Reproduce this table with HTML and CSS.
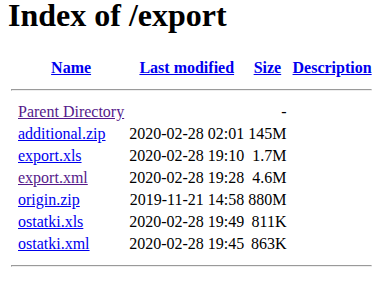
FILE: index.html
```html
<!DOCTYPE html>
<html>
<head>
<meta charset="utf-8">
<title>Index of /export</title>
<link rel="stylesheet" href="styles.css">
</head>
<body>
<h1 class="title">Index of /export</h1>
<table class="listing">
<tr><th class="ico"></th><th><a href="#n">Name</a></th><th class="date"><a href="#m">Last modified</a></th><th class="size"><a href="#s">Size</a></th><th class="desc"><a href="#d">Description</a></th></tr>
<tr><th colspan="5"><hr class="rule"></th></tr>
<tr><td class="ico"></td><td><a class="visited" href="#p">Parent Directory</a></td><td class="date">&nbsp;</td><td class="num">- </td><td>&nbsp;</td></tr>
<tr><td class="ico"></td><td><a href="#1">additional.zip</a></td><td class="num date">2020-02-28 02:01</td><td class="num">145M</td><td>&nbsp;</td></tr>
<tr><td class="ico"></td><td><a href="#2">export.xls</a></td><td class="num date">2020-02-28 19:10</td><td class="num">1.7M</td><td>&nbsp;</td></tr>
<tr><td class="ico"></td><td><a class="visited" href="#3">export.xml</a></td><td class="num date">2020-02-28 19:28</td><td class="num">4.6M</td><td>&nbsp;</td></tr>
<tr><td class="ico"></td><td><a href="#4">origin.zip</a></td><td class="num date">2019-11-21 14:58</td><td class="num">880M</td><td>&nbsp;</td></tr>
<tr><td class="ico"></td><td><a href="#5">ostatki.xls</a></td><td class="num date">2020-02-28 19:49</td><td class="num">811K</td><td>&nbsp;</td></tr>
<tr><td class="ico"></td><td><a href="#6">ostatki.xml</a></td><td class="num date">2020-02-28 19:45</td><td class="num">863K</td><td>&nbsp;</td></tr>
<tr><th colspan="5"><hr class="rule"></th></tr>
</table>
</body>
</html>
```
FILE: styles.css
```css
html, body {
  background: #fff;
  color: #000;
}
body {
  margin: 0 8px 8px;
  font-family: "Liberation Serif", "Times New Roman", serif;
  font-size: 16px;
}
.title {
  font-size: 32px;
  font-weight: bold;
  line-height: 30px;
  margin: 0 0 26px;
}
.listing {
  border-spacing: 2px;
}
.listing th, .listing td {
  padding: 1px;
}
.listing .ico {
  width: 3px;
}
.listing .date {
  padding-left: 2px;
}
.listing .num {
  text-align: right;
}
.listing .desc {
  padding-left: 3px;
}
.listing a {
  color: #0000ee;
}
.listing a.visited {
  color: #551a8b;
}
.rule {
  margin: 8px 0;
}
```
